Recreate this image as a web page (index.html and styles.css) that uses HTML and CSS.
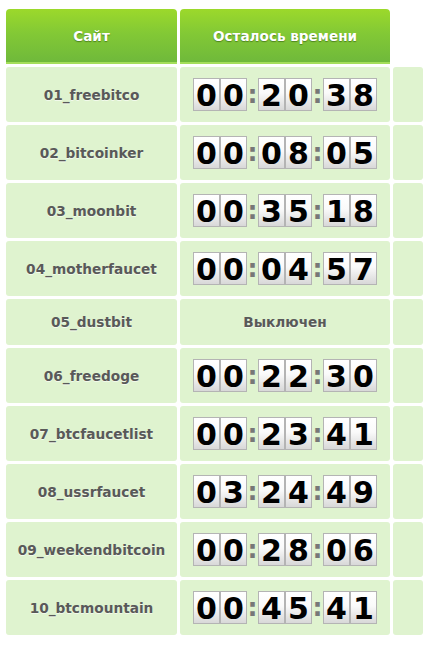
FILE: index.html
```html
<!DOCTYPE html>
<html lang="ru">
<head>
<meta charset="utf-8">
<title>Таймеры</title>
<link rel="stylesheet" href="styles.css">
</head>
<body>
<table class="sites">
  <thead>
    <tr>
      <th class="col-site">Сайт</th>
      <th class="col-time">Осталось времени</th>
      <th class="col-extra empty"></th>
    </tr>
  </thead>
  <tbody>
    <tr>
      <td class="site">01_freebitco</td>
      <td class="time"><span class="counter"><span class="d">0</span><span class="d">0</span><span class="sep">:</span><span class="d">2</span><span class="d">0</span><span class="sep">:</span><span class="d">3</span><span class="d">8</span></span></td>
      <td class="extra"></td>
    </tr>
    <tr>
      <td class="site">02_bitcoinker</td>
      <td class="time"><span class="counter"><span class="d">0</span><span class="d">0</span><span class="sep">:</span><span class="d">0</span><span class="d">8</span><span class="sep">:</span><span class="d">0</span><span class="d">5</span></span></td>
      <td class="extra"></td>
    </tr>
    <tr>
      <td class="site">03_moonbit</td>
      <td class="time"><span class="counter"><span class="d">0</span><span class="d">0</span><span class="sep">:</span><span class="d">3</span><span class="d">5</span><span class="sep">:</span><span class="d">1</span><span class="d">8</span></span></td>
      <td class="extra"></td>
    </tr>
    <tr>
      <td class="site">04_motherfaucet</td>
      <td class="time"><span class="counter"><span class="d">0</span><span class="d">0</span><span class="sep">:</span><span class="d">0</span><span class="d">4</span><span class="sep">:</span><span class="d">5</span><span class="d">7</span></span></td>
      <td class="extra"></td>
    </tr>
    <tr>
      <td class="site">05_dustbit</td>
      <td class="time off">Выключен</td>
      <td class="extra"></td>
    </tr>
    <tr>
      <td class="site">06_freedoge</td>
      <td class="time"><span class="counter"><span class="d">0</span><span class="d">0</span><span class="sep">:</span><span class="d">2</span><span class="d">2</span><span class="sep">:</span><span class="d">3</span><span class="d">0</span></span></td>
      <td class="extra"></td>
    </tr>
    <tr>
      <td class="site">07_btcfaucetlist</td>
      <td class="time"><span class="counter"><span class="d">0</span><span class="d">0</span><span class="sep">:</span><span class="d">2</span><span class="d">3</span><span class="sep">:</span><span class="d">4</span><span class="d">1</span></span></td>
      <td class="extra"></td>
    </tr>
    <tr>
      <td class="site">08_ussrfaucet</td>
      <td class="time"><span class="counter"><span class="d">0</span><span class="d">3</span><span class="sep">:</span><span class="d">2</span><span class="d">4</span><span class="sep">:</span><span class="d">4</span><span class="d">9</span></span></td>
      <td class="extra"></td>
    </tr>
    <tr>
      <td class="site">09_weekendbitcoin</td>
      <td class="time"><span class="counter"><span class="d">0</span><span class="d">0</span><span class="sep">:</span><span class="d">2</span><span class="d">8</span><span class="sep">:</span><span class="d">0</span><span class="d">6</span></span></td>
      <td class="extra"></td>
    </tr>
    <tr>
      <td class="site">10_btcmountain</td>
      <td class="time"><span class="counter"><span class="d">0</span><span class="d">0</span><span class="sep">:</span><span class="d">4</span><span class="d">5</span><span class="sep">:</span><span class="d">4</span><span class="d">1</span></span></td>
      <td class="extra"></td>
    </tr>
  </tbody>
</table>
</body>
</html>
```
FILE: styles.css
```css
html, body {
  margin: 0;
  padding: 0;
  background: #ffffff;
}

body {
  font-family: "DejaVu Sans", Verdana, sans-serif;
}

.sites {
  margin: 6px 0 0 3px;
  border-collapse: separate;
  border-spacing: 3px;
  table-layout: fixed;
}

.sites th,
.sites td {
  box-sizing: border-box;
  padding: 0;
  text-align: center;
  vertical-align: middle;
}

.sites th {
  height: 55px;
  color: #ffffff;
  font-size: 13.6px;
  font-weight: bold;
  text-shadow: 0 1px 1px rgba(40, 80, 10, 0.55);
  background: linear-gradient(#9cd92b 0%, #83c935 45%, #6fb93b 100%);
  border-bottom: 2px solid #a4de5a;
  border-radius: 4px 4px 0 0;
}

.sites th.empty {
  background: transparent;
  border: none;
}

.col-site { width: 171px; }
.col-time { width: 210px; }
.col-extra { width: 30px; }

.sites td {
  background: #dff3cf;
  border-radius: 3px;
  padding: 11px 0;
  color: #595959;
  font-size: 13.7px;
  font-weight: bold;
  line-height: 24px;
  text-shadow: 0 1px 0 rgba(255, 255, 255, 0.6);
}

.counter {
  display: inline-flex;
  align-items: stretch;
  vertical-align: middle;
  height: 33px;
}

.counter .d {
  box-sizing: border-box;
  width: 27px;
  height: 33px;
  padding-top: 2px;
  border: 1px solid #b4b4b4;
  background: linear-gradient(#ffffff 0%, #fafafa 45%, #e4e4e4 80%, #d8d8d8 100%);
  color: #000000;
  font-size: 30px;
  font-weight: bold;
  line-height: 30px;
  text-shadow: none;
  display: flex;
  align-items: center;
  justify-content: center;
}

.counter .sep {
  width: 11px;
  color: #777777;
  font-size: 25px;
  font-weight: bold;
  line-height: 33px;
  text-shadow: none;
  display: flex;
  align-items: center;
  justify-content: center;
}
```
